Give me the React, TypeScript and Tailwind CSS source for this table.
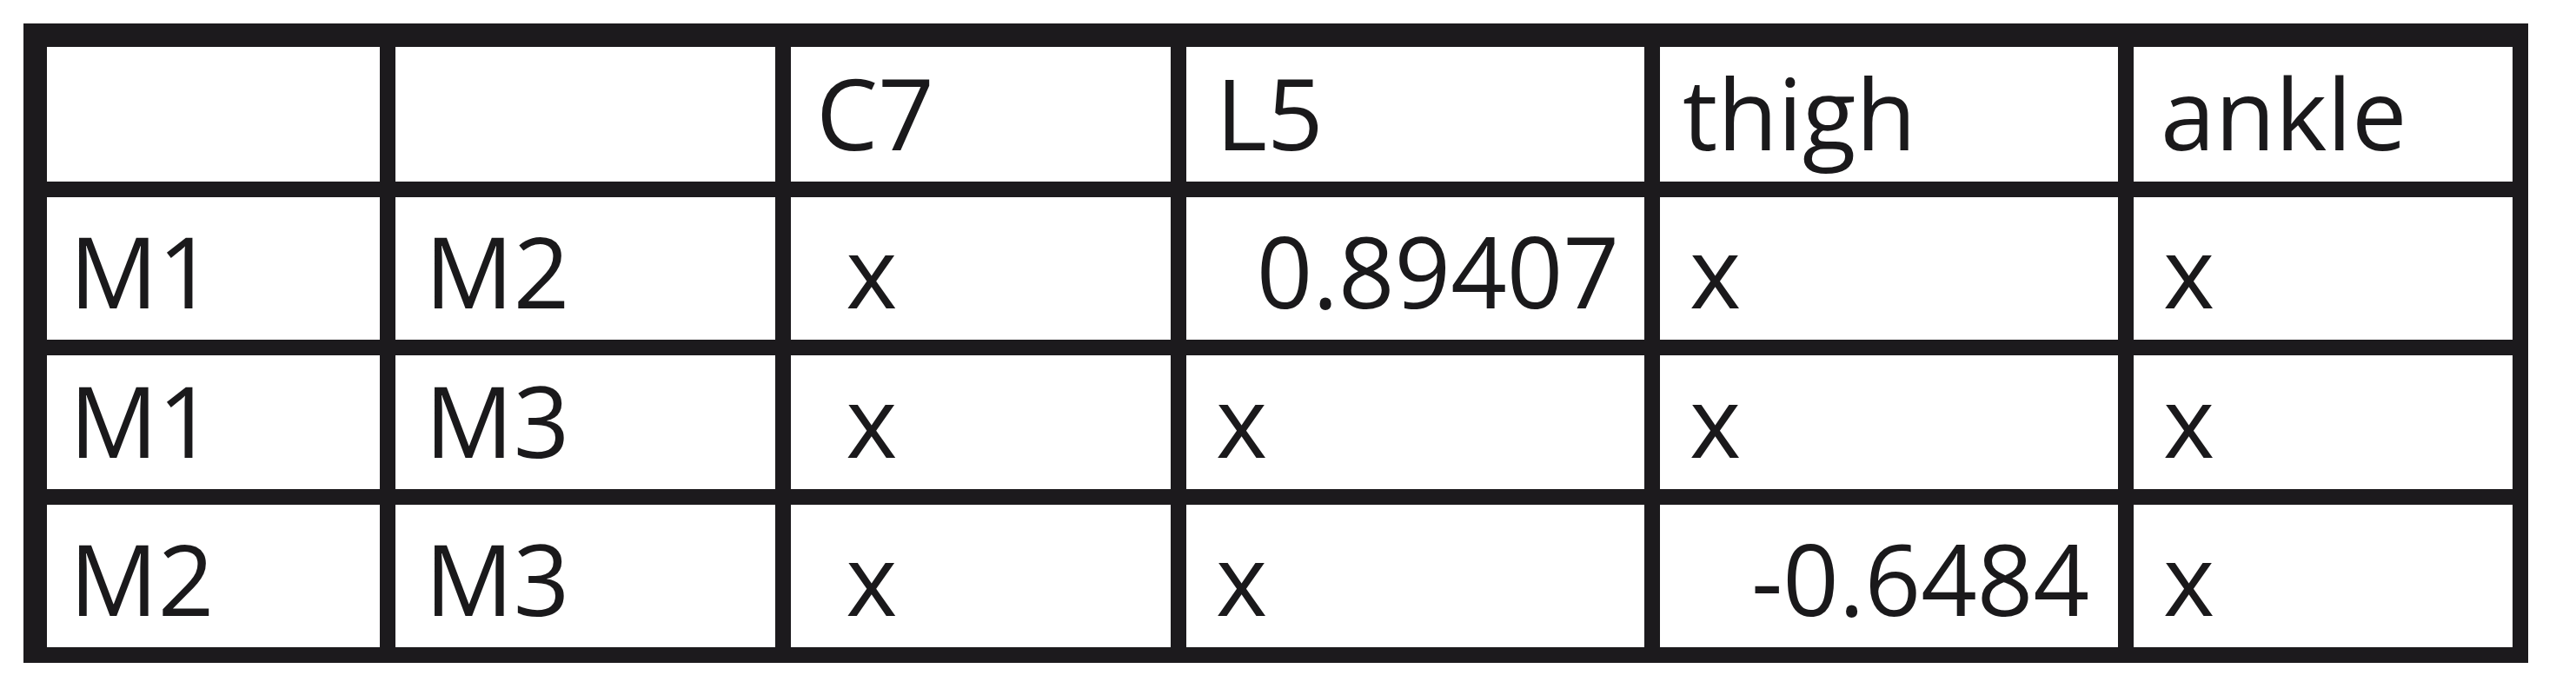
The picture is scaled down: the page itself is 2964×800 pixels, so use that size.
import React from "react";

type Cell = { t: string; cls: string };

const rows: Cell[][] = [
  [
    { t: "", cls: "" },
    { t: "", cls: "" },
    { t: "C7", cls: "pl-[29px]" },
    { t: "L5", cls: "pl-[34px]" },
    { t: "thigh", cls: "pl-[26px]" },
    { t: "ankle", cls: "pl-[31px]" },
  ],
  [
    { t: "M1", cls: "pl-[26px]" },
    { t: "M2", cls: "pl-[34px]" },
    { t: " x", cls: "pl-[34px]" },
    { t: "0.89407", cls: "justify-end pr-[29px]" },
    { t: "x", cls: "pl-[34px]" },
    { t: "x", cls: "pl-[34px]" },
  ],
  [
    { t: "M1", cls: "pl-[26px]" },
    { t: "M3", cls: "pl-[34px]" },
    { t: " x", cls: "pl-[34px]" },
    { t: "x", cls: "pl-[34px]" },
    { t: "x", cls: "pl-[34px]" },
    { t: "x", cls: "pl-[34px]" },
  ],
  [
    { t: "M2", cls: "pl-[26px]" },
    { t: "M3", cls: "pl-[34px]" },
    { t: " x", cls: "pl-[34px]" },
    { t: "x", cls: "pl-[34px]" },
    { t: "-0.6484", cls: "justify-end pr-[33px]" },
    { t: "x", cls: "pl-[34px]" },
  ],
];

export default function App() {
  return (
    <div className="w-[2964px] h-[800px] bg-white pt-[27px] pl-[27px]">
      <div className="w-[2882px] grid grid-cols-[383px_437px_437px_527px_527px_436px] grid-rows-[155px_164px_154px_164px] gap-[18px] bg-[#1c1a1d] pt-[27px] pl-[27px] pr-[18px] pb-[18px]">
        {rows.flatMap((r, i) =>
          r.map((c, j) => (
            <div
              key={`${i}-${j}`}
              className={`bg-white flex items-end pb-[23px] text-[113px] leading-[113px] text-[#1a191b] whitespace-pre font-['Open_Sans',sans-serif] ${c.cls}`}
            >
              {c.t}
            </div>
          ))
        )}
      </div>
    </div>
  );
}
